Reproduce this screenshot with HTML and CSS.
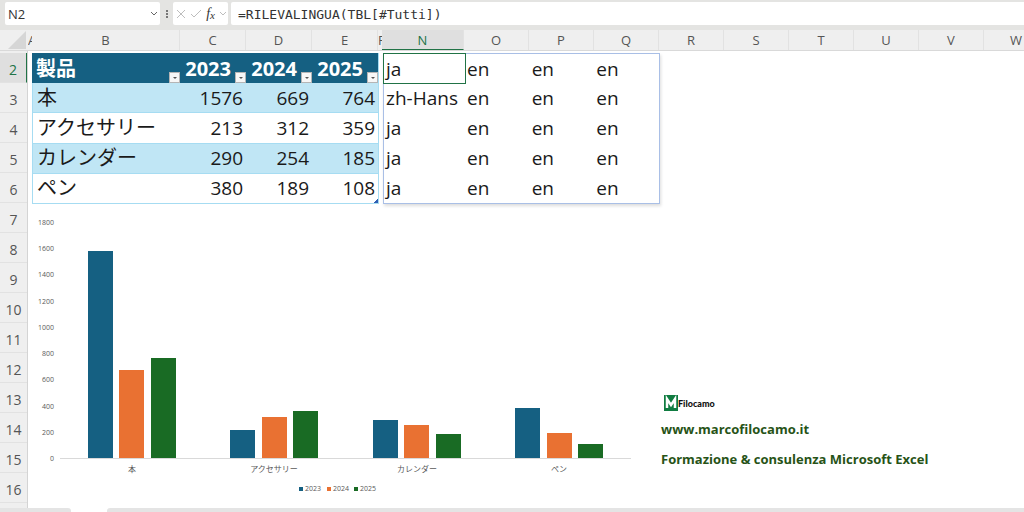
FILE: index.html
```html
<!DOCTYPE html>
<html lang="it">
<head>
<meta charset="utf-8">
<title>RILEVALINGUA</title>
<link rel="stylesheet" href="styles.css">
</head>
<body>
<header class="formula-bar">
  <div class="name-box">
    <input class="name-input" type="text" value="N2" aria-label="Casella Nome">
    <button class="tool" type="button" aria-label="Elenco nomi"><svg width="8" height="6" viewBox="0 0 8 6"><path d="M1 1l3 3 3-3" class="stroke-mid"/></svg></button>
  </div>
  <svg class="grip" width="4" height="10" viewBox="0 0 4 10"><path d="M1 1h2v2H1zM1 4h2v2H1zM1 7h2v2H1z" fill="#777"/></svg>
  <div class="tools">
    <button class="tool" type="button" aria-label="Annulla"><svg width="10" height="10" viewBox="0 0 10 10"><path d="M1 1l8 8M9 1L1 9" class="stroke-light"/></svg></button>
    <button class="tool" type="button" aria-label="Invio"><svg width="12" height="10" viewBox="0 0 12 10"><path d="M1 5l3 3 7-7" class="stroke-light"/></svg></button>
    <button class="tool fx" type="button" aria-label="Inserisci funzione">f<span class="fx-x">x</span></button>
    <button class="tool" type="button" aria-label="Altre funzioni"><svg width="8" height="6" viewBox="0 0 8 6"><path d="M1 1l3 3 3-3" class="stroke-light"/></svg></button>
  </div>
  <input class="formula" type="text" value="=RILEVALINGUA(TBL[#Tutti])" aria-label="Formula" spellcheck="false">
</header>

<div class="columns">
  <span class="corner"><svg width="18" height="18" viewBox="0 0 18 18"><path d="M18 0v18H0z" fill="#d6d6d6"/></svg></span>
  <span class="col col-narrow">A</span><span class="col col-b">B</span><span class="col col-c">C</span><span class="col col-c">D</span><span class="col col-c">E</span><span class="col col-narrow">F</span><span class="col col-n">N</span><span class="col">O</span><span class="col">P</span><span class="col">Q</span><span class="col">R</span><span class="col">S</span><span class="col">T</span><span class="col">U</span><span class="col">V</span><span class="col">W</span>
</div>

<main class="sheet">
  <div class="rows">
    <span class="row row-active">2</span><span class="row">3</span><span class="row">4</span><span class="row">5</span><span class="row">6</span><span class="row">7</span><span class="row">8</span><span class="row">9</span><span class="row">10</span><span class="row">11</span><span class="row">12</span><span class="row">13</span><span class="row">14</span><span class="row">15</span><span class="row">16</span>
  </div>
  <div class="content">
    <div class="tables">
      <table class="products">
        <thead>
          <tr>
            <th class="col-b"><div class="head"><span>製品</span><button class="filter" type="button" aria-label="Filtra 製品"></button></div></th>
            <th class="col-c"><div class="head head-year"><span>2023</span><button class="filter" type="button" aria-label="Filtra 2023"></button></div></th>
            <th class="col-c"><div class="head head-year"><span>2024</span><button class="filter" type="button" aria-label="Filtra 2024"></button></div></th>
            <th class="col-c"><div class="head head-year"><span>2025</span><button class="filter" type="button" aria-label="Filtra 2025"></button></div></th>
          </tr>
        </thead>
        <tbody>
          <tr class="band"><td>本</td><td class="num">1576</td><td class="num">669</td><td class="num">764</td></tr>
          <tr><td>アクセサリー</td><td class="num">213</td><td class="num">312</td><td class="num">359</td></tr>
          <tr class="band"><td>カレンダー</td><td class="num">290</td><td class="num">254</td><td class="num">185</td></tr>
          <tr><td>ペン</td><td class="num">380</td><td class="num">189</td><td class="num last">108</td></tr>
        </tbody>
      </table>
      <table class="spill">
        <tbody>
          <tr><td class="col-n selected">ja</td><td>en</td><td>en</td><td>en</td></tr>
          <tr><td>zh-Hans</td><td>en</td><td>en</td><td>en</td></tr>
          <tr><td>ja</td><td>en</td><td>en</td><td>en</td></tr>
          <tr><td>ja</td><td>en</td><td>en</td><td>en</td></tr>
          <tr><td>ja</td><td>en</td><td>en</td><td>en</td></tr>
        </tbody>
      </table>
    </div>
    <div class="lower">
      <svg class="chart" width="620" height="300" viewBox="28 204 620 300" role="img" aria-label="Vendite per prodotto">
        <g class="axis-value">
          <text x="54" y="225">1800</text><text x="54" y="251">1600</text><text x="54" y="277">1400</text><text x="54" y="304">1200</text><text x="54" y="330">1000</text><text x="54" y="356">800</text><text x="54" y="382">600</text><text x="54" y="409">400</text><text x="54" y="435">200</text><text x="54" y="461">0</text>
        </g>
        <path d="M60 458.500H631" stroke="#d9d9d9"/>
        <g fill="#156082">
          <rect x="88" y="251" width="25" height="207"/><rect x="230" y="430" width="25" height="28"/><rect x="373" y="420" width="25" height="38"/><rect x="515" y="408" width="25" height="50"/>
          <rect x="299" y="487" width="4" height="4"/>
        </g>
        <g fill="#e97132">
          <rect x="119" y="370" width="25" height="88"/><rect x="262" y="417" width="25" height="41"/><rect x="404" y="425" width="25" height="33"/><rect x="547" y="433" width="25" height="25"/>
          <rect x="327" y="487" width="4" height="4"/>
        </g>
        <g fill="#196b24">
          <rect x="151" y="358" width="25" height="100"/><rect x="293" y="411" width="25" height="47"/><rect x="436" y="434" width="25" height="24"/><rect x="578" y="444" width="25" height="14"/>
          <rect x="354" y="487" width="4" height="4"/>
        </g>
        <g class="axis-category">
          <text x="132" y="472">本</text><text x="274" y="472">アクセサリー</text><text x="417" y="472">カレンダー</text><text x="559" y="472">ペン</text>
        </g>
        <g class="legend">
          <text x="305" y="491">2023</text><text x="333" y="491">2024</text><text x="360" y="491">2025</text>
        </g>
      </svg>
      <address class="contact">
        <div class="brand"><span class="brand-mark"><svg width="14" height="16" viewBox="0 0 14 16"><path d="M0 0h14v16H0z" fill="#107c41"/><path d="M3 13V4l4 6 4-6v9" fill="none" stroke="#fff" stroke-width="2.500"/></svg></span><span>Filocamo</span></div>
        <a href="#sito">www.marcofilocamo.it</a>
        <p class="tagline">Formazione &amp; consulenza Microsoft Excel</p>
      </address>
    </div>
  </div>
</main>
<footer class="tabs"><span class="tabs-left"></span><span class="tab-active"></span><span class="tabs-right"></span></footer>
</body>
</html>
```
FILE: styles.css
```css
* { box-sizing: border-box; }

body {
  margin: 0;
  height: 100vh;
  display: flex;
  flex-direction: column;
  overflow: hidden;
  background: #fff;
  color: #1a1a1a;
  font-family: "Open Sans", "Noto Sans CJK JP", sans-serif;
}

button, input {
  border: 0;
  padding: 0;
  margin: 0;
  background: none;
  font: inherit;
  color: inherit;
}

/* Formula bar */
.formula-bar {
  flex: none;
  height: 30px;
  padding: 2px 0 5px 5px;
  display: flex;
  align-items: stretch;
  background: #e4e4e2;
  color: #333;
}
.name-box {
  width: 155px;
  padding: 0 2px;
  display: flex;
  background: #fff;
  border-radius: 2px;
}
.name-input { flex: 1; min-width: 0; font-size: 13px; padding-left: 1px; }
.grip { align-self: center; margin: 0 4px 0 5px; }
.tools {
  width: 55px;
  padding: 0 1px 0 3px;
  display: flex;
  justify-content: space-between;
  background: #fff;
  border-radius: 2px;
}
.tool { display: flex; align-items: center; }
.stroke-mid, .stroke-light { fill: none; stroke: #666; }
.stroke-light { stroke: #bdbdbd; }
.fx { font: italic 14px "Liberation Serif", serif; }
.fx-x { font-size: 11px; align-self: center; padding-top: 3px; }
.formula {
  flex: 1;
  min-width: 0;
  margin-left: 3px;
  padding: 2px 0 0 7px;
  background: #fff;
  border-radius: 2px 0 0 2px;
  font: 13px "DejaVu Sans Mono", monospace;
}

/* Column headings */
.columns {
  flex: none;
  height: 21px;
  display: flex;
  overflow: hidden;
  background: #efefef;
  border-bottom: 1px solid #d9d9d9;
  color: #555;
  font-size: 13px;
  line-height: 21px;
}
.corner { flex: none; width: 28px; padding: 1px 1px 0 8px; }
.col {
  flex: none;
  width: 65px;
  display: flex;
  justify-content: center;
  border-right: 1px solid #e2e2e2;
}
.columns .col-narrow { width: 4px; justify-content: flex-start; overflow: hidden; border-right: 0; }
.columns .col-b, .col-b { width: 148px; }
.columns .col-c, .col-c { width: 66px; }
.columns .col-n, .col-n { width: 82px; }
.columns .col-n { background: #dfdfdf; color: #217346; border-bottom: 1px solid #217346; }

/* Sheet */
.sheet { flex: 1; min-height: 0; display: flex; overflow: hidden; }
.rows {
  flex: none;
  width: 28px;
  padding-top: 2px;
  background: #efefef;
  border-right: 1px solid #d4d4d4;
  color: #555;
  font-size: 14px;
  line-height: 34px;
  text-align: center;
}
.row { display: block; height: 30px; border-bottom: 1px solid #e2e2e2; }
.row-active { background: #dfdfdf; color: #217346; border-right: 1px solid #217346; }
.content { flex: 1; min-width: 0; }
.tables { display: flex; gap: 4px; padding: 2px 0 0 4px; }

table { table-layout: fixed; border-collapse: separate; border-spacing: 0; font-size: 19px; }
td, th { height: 30px; padding: 0 4px; line-height: 28px; text-align: left; white-space: nowrap; }

.products { width: 346px; border-right: 1px solid #a6dcf2; }
.products th { padding: 0; background: #156082; color: #fff; font-size: 20px; line-height: 32px; }
.products td { border-bottom: 1px solid #a6dcf2; }
.products td:first-child { border-left: 1px solid #a6dcf2; font-size: 20px; }
.band td { background: #c0e6f5; }
.products .num { padding-right: 3px; text-align: right; }
.products .last { background: linear-gradient(135deg, transparent 50%, #2f5fb3 50%) right bottom / 4px 4px no-repeat; }

.head { height: 30px; padding-left: 4px; display: flex; justify-content: space-between; }
.head-year { padding-left: 0; justify-content: flex-end; gap: 4px; }
.filter {
  align-self: flex-end;
  width: 11px;
  height: 11px;
  display: flex;
  align-items: center;
  justify-content: center;
  background: #f7f7f7;
  border: 1px solid #b5b5b5;
}
.filter::after { content: ""; border: 2px solid transparent; border-top-color: #555; border-bottom: 0; }

.spill { width: 277px; border: 1px solid #a9bfe6; box-shadow: 1px 2px 3px #ddd; }
.spill td { padding: 0 2px; }
.spill tr:first-child td { height: 29px; }
.spill .col-n { width: 81px; }
.spill .selected { outline: 1px solid #217346; }

/* Chart and contact details */
.lower { display: flex; align-items: flex-start; }
.chart { flex: none; display: block; }
.axis-value, .axis-category, .legend { fill: #595959; font-size: 7px; }
.axis-value { text-anchor: end; }
.axis-category { text-anchor: middle; font-size: 8px; }

.contact {
  margin: 191px 0 0 13px;
  color: #275317;
  font-size: 13px;
  font-style: normal;
  font-weight: bold;
  line-height: 30px;
  white-space: nowrap;
}
.contact a { display: block; color: inherit; text-decoration: none; }
.tagline { margin: 0; }
.brand {
  height: 19px;
  padding-left: 3px;
  display: flex;
  align-items: flex-start;
  color: #111;
  font: 900 9px/18px Lato, sans-serif;
}
.brand-mark { display: flex; }

/* Sheet tabs */
.tabs { flex: none; height: 4px; display: flex; }
.tabs-left { width: 71px; background: #e4e4e4; border-top-right-radius: 3px; }
.tab-active { width: 36px; }
.tabs-right { flex: 1; background: #e4e4e4; border-top-left-radius: 3px; }
```
